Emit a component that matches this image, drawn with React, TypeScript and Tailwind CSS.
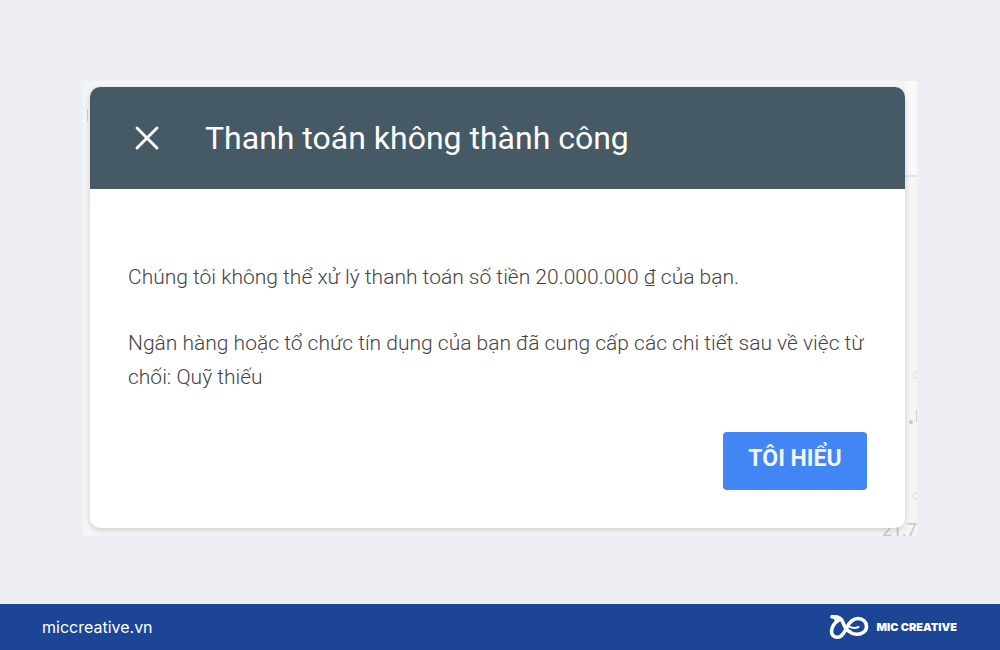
import React from 'react';
import { X } from 'lucide-react';

const paragraphs = [
  'Chúng tôi không thể xử lý thanh toán số tiền 20.000.000 ₫ của bạn.',
  'Ngân hàng hoặc tổ chức tín dụng của bạn đã cung cấp các chi tiết sau về việc từ chối: Quỹ thiếu',
];

function KnotLogo() {
  return (
    <svg viewBox="0 0 40 26" className="w-10 h-[26px]" fill="none" stroke="white" strokeWidth="3.6" strokeLinecap="round" strokeLinejoin="round" aria-hidden="true">
      <path d="M3 2.800 C8 2.300 12 3.500 13.500 7.500 C15 12 18.500 19.500 27.500 20.300 C33.500 20.500 37.500 17 37.500 12.500 C37.500 8 34 4.500 29 4.500 C23 4.500 20 9 17.500 14 C15 19.500 12.500 23.300 8.500 23.300 C4.500 23.300 2.300 20.500 2.500 17 C2.800 12 6 8.500 10 6" />
      <path d="M3 2.800 C5 3.200 6.500 4.500 7 7" strokeWidth="2.4" />
      <path d="M19 12 C22 14 26 14.500 29.500 13" strokeWidth="2" />
    </svg>
  );
}

// the page that stays visible around the edges of the dialog
function Backdrop() {
  return (
    <div aria-hidden="true" className="absolute inset-0 bg-[#f5f5f5]">
      <div className="absolute right-0 top-0 h-24 w-3 border-b-2 border-[#e6e6e6] bg-[#fafafa]" />
      <div className="absolute left-1 top-7 h-3 w-px bg-[#d0d0d0]" />
      <div className="absolute right-0 top-[290px] h-2 w-1 rounded-l-full border border-r-0 border-[#dedede]" />
      <div className="absolute right-1 bottom-28 size-1 rounded-full bg-[#c8c8c8]" />
      <div className="absolute right-0 bottom-[114px] h-3 w-px bg-[#d0d0d0]" />
      <div className="absolute right-0 bottom-9 h-2 w-1 rounded-l-full border border-r-0 border-[#dedede]" />
      <div className="absolute right-0 -bottom-1 text-[18px] leading-5 text-[#c8c8c8]">21.7</div>
    </div>
  );
}

function Dialog() {
  return (
    <section role="dialog" aria-labelledby="dialog-title" className="relative rounded-[10px] bg-white overflow-hidden shadow-[0_2px_6px_rgba(0,0,0,0.16)]">
      <header className="h-[102px] flex items-center gap-[38px] px-[37px] bg-[#465a65] text-white">
        <button type="button" aria-label="Đóng" className="flex">
          <X size={40} strokeWidth={1.7} />
        </button>
        <h1 id="dialog-title" className="text-[32px] leading-10">Thanh toán không thành công</h1>
      </header>
      <div className="pl-[38px] pr-[34px] pt-[71px] pb-[38px]">
        <div className="flex flex-col gap-8 text-[21px] leading-[34px] font-light text-[#444444]">
          {paragraphs.map((text) => (
            <p key={text}>{text}</p>
          ))}
        </div>
        <div className="flex justify-end mt-[38px] pr-1">
          <button type="button" className="h-[58px] w-36 pb-1 rounded-sm bg-[#4285f4] text-[23px] font-bold text-[#f0f5ff]">
            TÔI HIỂU
          </button>
        </div>
      </div>
    </section>
  );
}

export default function App() {
  return (
    <div className="min-h-screen flex flex-col bg-[#eeeff5] font-['Roboto',sans-serif]">
      <main className="flex-1 px-[83px] pt-[81px] pb-16">
        <div className="relative overflow-hidden pt-1.5 pb-2 pl-[7px] pr-3">
          <Backdrop />
          <Dialog />
        </div>
      </main>
      <footer className="h-[46px] shrink-0 flex items-center justify-between pl-[42px] pr-[43px] bg-[#1c4595] text-white font-['Inter',sans-serif]">
        <a href="#" className="text-[16px] leading-5">miccreative.vn</a>
        <div className="flex items-center gap-2">
          <KnotLogo />
          <span className="text-[11px] font-black">MIC CREATIVE</span>
        </div>
      </footer>
    </div>
  );
}
